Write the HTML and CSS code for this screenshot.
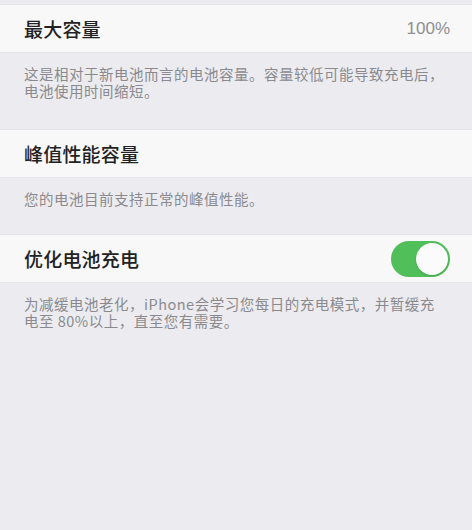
FILE: index.html
```html
<!DOCTYPE html>
<html lang="zh-CN">
<head>
<meta charset="utf-8">
<title>电池健康</title>
<link rel="stylesheet" href="styles.css">
</head>
<body>
<div class="page">
  <div class="top-gap"></div>
  <div class="row">
    <span class="label">最大容量</span>
    <span class="value">100%</span>
  </div>
  <div class="footer footer-1">
    <div class="line">这是相对于新电池而言的电池容量。容量较低可能导致充电后，</div>
    <div class="line">电池使用时间缩短。</div>
  </div>
  <div class="row">
    <span class="label">峰值性能容量</span>
  </div>
  <div class="footer footer-2">
    <div class="line">您的电池目前支持正常的峰值性能。</div>
  </div>
  <div class="row">
    <span class="label">优化电池充电</span>
    <span class="switch"><span class="knob"></span></span>
  </div>
  <div class="footer footer-3">
    <div class="line">为减缓电池老化，iPhone会学习您每日的充电模式，并暂缓充</div>
    <div class="line">电至 80%以上，直至您有需要。</div>
  </div>
</div>
</body>
</html>
```
FILE: styles.css
```css
html, body {
  margin: 0;
  padding: 0;
  background: #ececf0;
}
.page {
  width: 472px;
  height: 530px;
  background: #ececf0;
  font-family: "Noto Sans CJK SC", "Noto Sans", sans-serif;
}
.top-gap {
  height: 4px;
}
.row {
  height: 49px;
  box-sizing: border-box;
  background: #f8f8f8;
  border-top: 1px solid #e4e4e8;
  border-bottom: 1px solid #e4e4e8;
  display: flex;
  align-items: center;
  justify-content: space-between;
  padding: 0 22px 0 24px;
}
.label {
  font-size: 19px;
  font-weight: 500;
  color: #222224;
  letter-spacing: 0.2px;
}
.value {
  font-family: "Liberation Sans", "Noto Sans", sans-serif;
  font-size: 17px;
  color: #8e8e93;
}
.footer {
  font-size: 14.5px;
  color: #8a8a8e;
  padding: 12px 0 0 24px;
  box-sizing: border-box;
  letter-spacing: 0.5px;
  white-space: nowrap;
}
.line {
  height: 17px;
  line-height: 17px;
}
.footer-1 { height: 76px; }
.footer-2 { height: 56px; }
.footer-3 { height: 60px; }
.switch {
  width: 59px;
  height: 36px;
  border-radius: 18px;
  background: #50bf5a;
  display: flex;
  align-items: center;
  justify-content: flex-end;
  padding: 2px;
  box-sizing: border-box;
}
.knob {
  width: 32px;
  height: 32px;
  border-radius: 50%;
  background: #fbfbfb;
  box-shadow: 0 1px 2px rgba(0,0,0,0.15);
}
```
